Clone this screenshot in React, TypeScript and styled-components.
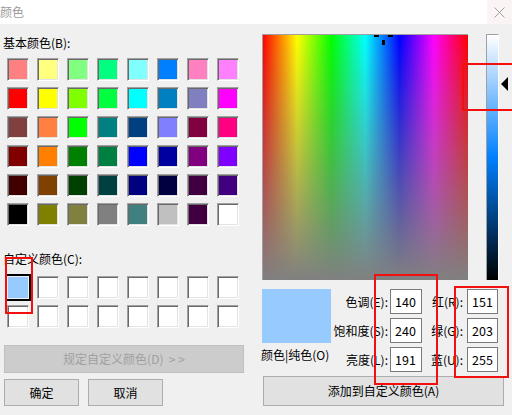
import React from "react";
import styled, { createGlobalStyle } from "styled-components";

const GlobalStyle = createGlobalStyle`
  html, body { margin: 0; padding: 0; background: #f0f0f0; }
  body { font-family: "Noto Sans CJK SC", "Noto Sans", sans-serif; font-size: 12px; color: #000; }
`;

const BASIC = [
  ["#FF8080", "#FFFF80", "#80FF80", "#00FF80", "#80FFFF", "#0080FF", "#FF80C0", "#FF80FF"],
  ["#FF0000", "#FFFF00", "#80FF00", "#00FF40", "#00FFFF", "#0080C0", "#8080C0", "#FF00FF"],
  ["#804040", "#FF8040", "#00FF00", "#008080", "#004080", "#8080FF", "#800040", "#FF0080"],
  ["#800000", "#FF8000", "#008000", "#008040", "#0000FF", "#0000A0", "#800080", "#8000FF"],
  ["#400000", "#804000", "#004000", "#004040", "#000080", "#000040", "#400040", "#400080"],
  ["#000000", "#808000", "#808040", "#808080", "#408080", "#C0C0C0", "#400040", "#FFFFFF"],
];

const CURRENT = "#97CBFF";

const Dialog = styled.div`
  position: relative;
  width: 512px;
  height: 415px;
  overflow: hidden;
  background: #f0f0f0;
`;

const TitleBar = styled.div`
  display: flex;
  align-items: center;
  justify-content: space-between;
  height: 24px;
  background: #fff;
`;

const Title = styled.span`
  margin-left: 0;
  color: #9a9a9a;
  font-size: 12px;
  line-height: 16px;
`;

const CloseButton = styled.div`
  display: flex;
  align-items: center;
  justify-content: center;
  width: 25px;
  height: 24px;
  background: #fbf4f4;
`;

const Body = styled.div`
  display: flex;
`;

const LeftPanel = styled.div`
  width: 262px;
  padding-top: 11px;
  display: flex;
  flex-direction: column;
`;

const Label = styled.div<{ $top?: number }>`
  margin-left: 3px;
  margin-top: ${(p) => p.$top ?? 0}px;
  line-height: 16px;
  height: 16px;
`;

const SwatchGrid = styled.div<{ $top: number }>`
  display: grid;
  grid-template-columns: repeat(8, 22px);
  grid-auto-rows: 23px;
  column-gap: 8px;
  row-gap: 6px;
  margin-left: 7px;
  margin-top: ${(p) => p.$top}px;
`;

const Swatch = styled.div<{ $color: string; $selected?: boolean }>`
  box-sizing: border-box;
  background: ${(p) => p.$color};
  border: 1px solid;
  border-color: #a0a0a0 #fff #fff #a0a0a0;
  box-shadow: inset 1px 1px #696969, inset -1px -1px #e3e3e3;
  ${(p) =>
    p.$selected &&
    `
    border-color: #f0f0f0;
    box-shadow: none;
    outline: 2px solid #000;
  `}
`;

const Button = styled.div<{ $width: number; $height: number; $disabled?: boolean }>`
  box-sizing: border-box;
  display: flex;
  align-items: center;
  justify-content: center;
  width: ${(p) => p.$width}px;
  height: ${(p) => p.$height}px;
  background: ${(p) => (p.$disabled ? "#cccccc" : "#e1e1e1")};
  border: 1px solid ${(p) => (p.$disabled ? "#bfbfbf" : "#adadad")};
  color: ${(p) => (p.$disabled ? "#a0a0a0" : "#000")};
  font-size: 12px;
  line-height: 16px;
  white-space: pre;
`;

const LeftButtons = styled.div`
  display: flex;
  flex-direction: column;
  margin-left: 4px;
  margin-top: 17px;
  gap: 6px;
`;

const ButtonRow = styled.div`
  display: flex;
  gap: 9px;
`;

const RightPanel = styled.div`
  padding-top: 10px;
  display: flex;
  flex-direction: column;
`;

const PickerRow = styled.div`
  display: flex;
  align-items: flex-start;
`;

const Spectrum = styled.div`
  position: relative;
  box-sizing: border-box;
  width: 206px;
  height: 246px;
  border-top: 1px solid #a0a0a0;
  border-left: 1px solid #a0a0a0;
  background:
    linear-gradient(to bottom, rgba(128, 128, 128, 0), rgba(128, 128, 128, 1)),
    linear-gradient(to right, #f00 0%, #ff0 16.67%, #0f0 33.33%, #0ff 50%, #00f 66.67%, #f0f 83.33%, #f00 100%);
`;

const CrossBar = styled.div<{ $left: number; $top: number; $w: number; $h: number }>`
  position: absolute;
  left: ${(p) => p.$left}px;
  top: ${(p) => p.$top}px;
  width: ${(p) => p.$w}px;
  height: ${(p) => p.$h}px;
  background: #000;
`;

const LumWrap = styled.div`
  position: relative;
  display: flex;
  margin-left: 18px;
`;

const LumBar = styled.div`
  box-sizing: border-box;
  width: 13px;
  height: 246px;
  border-top: 1px solid #a0a0a0;
  border-left: 1px solid #a0a0a0;
  border-right: 1px solid #fff;
  background: linear-gradient(to bottom, #fff 0%, #0080ff 50%, #000 100%);
`;

const LumArrow = styled.div`
  position: absolute;
  left: 15px;
  width: 0;
  height: 0;
  border-top: 7px solid transparent;
  border-bottom: 7px solid transparent;
  border-right: 7px solid #000;
`;

const Fields = styled.div`
  display: grid;
  grid-template-columns: 69px 59px 32px 45px 31px;
  grid-template-rows: repeat(3, 25px);
  row-gap: 4px;
  margin-top: 9px;
`;

const Preview = styled.div`
  grid-column: 1;
  grid-row: 1 / span 2;
  background: ${CURRENT};
`;

const PreviewLabel = styled.div`
  grid-column: 1 / span 2;
  grid-row: 3;
  margin-left: -1px;
  line-height: 16px;
  white-space: nowrap;
`;

const FieldLabel = styled.div<{ $pad: number }>`
  display: flex;
  align-items: center;
  justify-content: flex-end;
  padding-right: ${(p) => p.$pad}px;
  white-space: nowrap;
  line-height: 16px;
`;

const Field = styled.div`
  box-sizing: border-box;
  display: flex;
  align-items: center;
  padding-left: 4px;
  background: #fff;
  border: 1px solid #7a7a7a;
  font-size: 12.5px;
`;

const AddButton = styled(Button)`
  margin-top: 4px;
  margin-left: 1px;
`;

const Mark = styled.div<{ $x: number; $y: number; $w: number; $h: number }>`
  position: absolute;
  left: ${(p) => p.$x}px;
  top: ${(p) => p.$y}px;
  width: ${(p) => p.$w}px;
  height: ${(p) => p.$h}px;
  box-sizing: border-box;
  border: 2px solid #f40f0f;
  pointer-events: none;
`;

const hsl = [
  { label: "色调(E):", value: "140" },
  { label: "饱和度(S):", value: "240" },
  { label: "亮度(L):", value: "191" },
];
const rgb = [
  { label: "红(R):", value: "151" },
  { label: "绿(G):", value: "203" },
  { label: "蓝(U):", value: "255" },
];

export default function App() {
  const lum = 191 / 240;
  return (
    <>
      <GlobalStyle />
      <Dialog>
        <TitleBar>
          <Title>颜色</Title>
          <CloseButton>
            <svg width="11" height="11" viewBox="0 0 11 11">
              <path d="M0.5 0.5 L10.5 10.5 M10.5 0.5 L0.5 10.5" stroke="#a0a0a0" strokeWidth="1" />
            </svg>
          </CloseButton>
        </TitleBar>
        <Body>
          <LeftPanel>
            <Label>基本颜色(B):</Label>
            <SwatchGrid $top={7}>
              {BASIC.flat().map((c, i) => (
                <Swatch key={i} $color={c} />
              ))}
            </SwatchGrid>
            <Label $top={25}>自定义颜色(C):</Label>
            <SwatchGrid $top={9}>
              {Array.from({ length: 16 }).map((_, i) => (
                <Swatch key={i} $color={i === 0 ? CURRENT : "#fff"} $selected={i === 0} />
              ))}
            </SwatchGrid>
            <LeftButtons>
              <Button $width={240} $height={28} $disabled>
                {"规定自定义颜色(D)  > >"}
              </Button>
              <ButtonRow>
                <Button $width={75} $height={27}>确定</Button>
                <Button $width={75} $height={27}>取消</Button>
              </ButtonRow>
            </LeftButtons>
          </LeftPanel>
          <RightPanel>
            <PickerRow>
              <Spectrum>
                <CrossBar $left={111} $top={0} $w={5} $h={2} />
                <CrossBar $left={125} $top={0} $w={5} $h={2} />
                <CrossBar $left={119} $top={5} $w={3} $h={5} />
              </Spectrum>
              <LumWrap>
                <LumBar />
                <LumArrow style={{ top: Math.round((1 - lum) * 246) - 7 }} />
              </LumWrap>
            </PickerRow>
            <Fields>
              <Preview />
              {hsl.map((f, i) => (
                <React.Fragment key={f.label}>
                  <FieldLabel $pad={2} style={{ gridRow: i + 1, gridColumn: 2 }}>{f.label}</FieldLabel>
                  <Field style={{ gridRow: i + 1, gridColumn: 3 }}>{f.value}</Field>
                  <FieldLabel $pad={4} style={{ gridRow: i + 1, gridColumn: 4 }}>{rgb[i].label}</FieldLabel>
                  <Field style={{ gridRow: i + 1, gridColumn: 5 }}>{rgb[i].value}</Field>
                </React.Fragment>
              ))}
              <PreviewLabel>颜色|纯色(O)</PreviewLabel>
            </Fields>
            <AddButton $width={241} $height={30}>添加到自定义颜色(A)</AddButton>
          </RightPanel>
        </Body>
        <Mark $x={5} $y={257} $w={28} $h={57} />
        <Mark $x={462} $y={63} $w={52} $h={48} />
        <Mark $x={374} $y={274} $w={64} $h={111} />
        <Mark $x={454} $y={286} $w={55} $h={92} />
      </Dialog>
    </>
  );
}
